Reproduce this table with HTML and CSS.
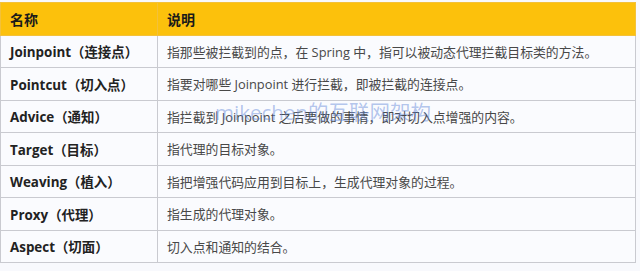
FILE: index.html
```html
<!DOCTYPE html>
<html lang="zh">
<head>
<meta charset="utf-8">
<link rel="stylesheet" href="styles.css">
</head>
<body>
<div class="wrap">
<table class="aop">
<thead>
<tr><th class="c1">名称</th><th class="c2">说明</th></tr>
</thead>
<tbody>
<tr><td class="name">Joinpoint（连接点）</td><td class="desc">指那些被拦截到的点，在 Spring 中，指可以被动态代理拦截目标类的方法。</td></tr>
<tr><td class="name">Pointcut（切入点）</td><td class="desc">指要对哪些 Joinpoint 进行拦截，即被拦截的连接点。</td></tr>
<tr><td class="name">Advice（通知）</td><td class="desc">指拦截到 Joinpoint 之后要做的事情，即对切入点增强的内容。</td></tr>
<tr><td class="name">Target（目标）</td><td class="desc">指代理的目标对象。</td></tr>
<tr><td class="name">Weaving（植入）</td><td class="desc">指把增强代码应用到目标上，生成代理对象的过程。</td></tr>
<tr><td class="name">Proxy（代理）</td><td class="desc">指生成的代理对象。</td></tr>
<tr><td class="name">Aspect（切面）</td><td class="desc">切入点和通知的结合。</td></tr>
</tbody>
</table>
<div class="watermark">mikechen的互联网架构</div>
</div>
</body>
</html>
```
FILE: styles.css
```css
html, body {
  margin: 0;
  padding: 0;
  background: #f8f9fd;
}
body {
  font-family: "Open Sans", "Noto Sans CJK SC", sans-serif;
}
.wrap {
  position: relative;
  padding-top: 2px;
  width: 640px;
  height: 269px;
}
.aop {
  border-collapse: collapse;
  width: 636px;
  table-layout: fixed;
}
.aop th, .aop td {
  border: 1px solid #c9cad0;
  height: 31.5px;
  padding: 0 0 0 9px;
  text-align: left;
  vertical-align: middle;
  white-space: nowrap;
}
.aop th {
  background: #fcc10c;
  border-color: #f3c13a;
  font-size: 14px;
  font-weight: 700;
  color: #1a1a1a;
  height: 31.5px;
}
.c1 { width: 147px; }
.c2 { width: auto; }
.aop td {
  background: #fafbfe;
}
.name {
  font-size: 13.4px;
  font-weight: 700;
  color: #222;
}
.desc {
  font-size: 12.85px;
  color: #484848;
}
.watermark {
  position: absolute;
  left: 215px;
  top: 96px;
  font-size: 20.5px;
  color: rgba(90, 130, 215, 0.45);
}
```
